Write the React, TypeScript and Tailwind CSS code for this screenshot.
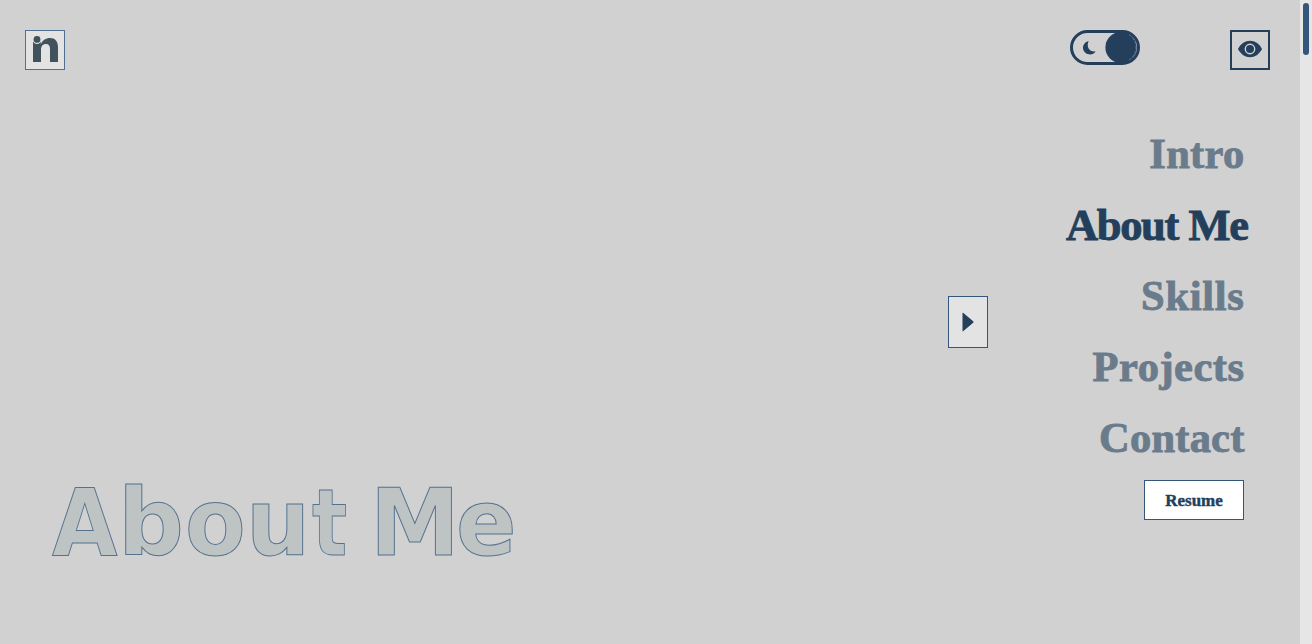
import React from "react";

type NavItem = { label: string; className: string };

const idle = "text-[42.5px] text-[#6a7c8c] pr-[55.5px]";

const items: NavItem[] = [
  { label: "Intro", className: idle + " tracking-[0.3px]" },
  { label: "About Me", className: "text-[44.5px] text-[#233f5b] pt-px pr-[52.5px] tracking-[-1.4px] [word-spacing:1px]" },
  { label: "Skills", className: idle + " tracking-[0.7px]" },
  { label: "Projects", className: idle + " tracking-[0.5px]" },
  { label: "Contact", className: idle + " tracking-[0.2px]" },
];

const letters = [
  { ch: "A", className: "w-[66px] scale-x-[0.91]" },
  { ch: "b", className: "w-[66.5px] scale-x-[0.99]" },
  { ch: "o", className: "w-[61px] scale-x-[0.95]" },
  { ch: "u", className: "w-[66.5px] scale-x-[0.97]" },
  { ch: "t", className: "w-[57.5px] scale-x-[0.79]" },
  { ch: "M", className: "w-[86.5px] scale-x-[0.97]" },
  { ch: "e", className: "w-[60px] scale-x-[0.96]" },
];

function Logo() {
  return (
    <div className="h-10 w-10 border border-[#4d7094] bg-[#e3e3e3]">
      <svg width="38" height="38" viewBox="26 31 38 38" fill="#41525a">
        <path d="M33 62V41.5H40.8V44.2C42.6 40.2 46 38 50 38C55.2 38 58 41.4 58 47V62H50V49C50 45.6 48.6 44 46 44C42.8 44 41 46 41 50V62Z" />
        <circle cx="37" cy="39.6" r="4.3" fill="#e3e3e3" />
        <circle cx="37" cy="39.4" r="3.4" />
      </svg>
    </div>
  );
}

function Toggle() {
  return (
    <button className="flex h-[35px] w-[70px] items-center justify-between rounded-full border-[3px] border-[#233f5b] pl-[9px]">
      <svg width="15" height="15" viewBox="0 0 15 15" fill="#233f5b">
        <path d="M6.7.9C.4 2.5-.8 9.8 3.6 13C7.4 15.7 12.5 14.3 13.7 11.2C8.2 12.5 3.6 7.4 6.7.9Z" />
      </svg>
      <svg width="32" height="31" viewBox="0 0 32 31">
        <circle cx="16" cy="15.5" r="15.6" fill="#233f5b" />
        <path d="M24 2.6A15 15 0 0 1 24 27.8" fill="none" stroke="#7c8b9a" strokeWidth=".6" strokeDasharray="3 1.5" />
      </svg>
    </button>
  );
}

export default function App() {
  return (
    <div className="flex h-[644px] w-full overflow-hidden bg-[#d1d1d1] font-['Liberation_Serif',serif]">
      <main className="flex flex-1 items-center">
        <section className="flex h-full flex-1 flex-col justify-between pt-[30px] pl-[25px]">
          <Logo />
          <h1
            aria-label="About Me"
            className="mb-[61px] ml-[27px] flex h-[120px] items-center whitespace-pre [font-family:'DejaVu_Sans',sans-serif] text-[93px] leading-[120px] font-bold text-[#bec3c4] [-webkit-text-stroke:1px_#55738f]"
          >
            {letters.map((l) => (
              <span key={l.ch} className={"origin-left " + l.className}>{l.ch}</span>
            ))}
          </h1>
        </section>
        <button className="flex h-[52px] w-10 items-center justify-center border border-[#34567a] bg-[#e3e3e3]">
          <svg width="12" height="20" viewBox="0 0 12 20" fill="#233f5b">
            <path d="M.5 1.2Q.5.2 1.4 1L11.2 9.3Q12 10 11.2 10.7L1.4 19Q.5 19.8.5 18.8Z" />
          </svg>
        </button>
        <aside className="flex h-full w-[312px] flex-col items-end pt-[30px]">
          <div className="flex w-full items-start justify-between pr-[30px] pl-[82px]">
            <Toggle />
            <button className="flex h-10 w-10 items-center justify-center border-2 border-[#233f5b]">
              <svg width="24" height="18" viewBox="0 0 24 18" className="-mt-[2px]">
                <path d="M0 9C3 3.5 7 .8 12 .8S21 3.5 24 9C21 14.5 17 17.2 12 17.2S3 14.5 0 9Z" fill="#233f5b" />
                <circle cx="12" cy="9" r="4.7" fill="none" stroke="#d1d1d1" strokeWidth="1.4" />
              </svg>
            </button>
          </div>
          <nav className="mt-12 flex w-full flex-col">
            {items.map((item) => (
              <a key={item.label} className={"block h-[71px] text-right leading-[71px] font-bold whitespace-nowrap [-webkit-text-stroke:0.9px_currentColor] " + item.className}>
                {item.label}
              </a>
            ))}
          </nav>
          <button className="mt-[7px] mr-14 h-10 w-[100px] border border-[#34567a] bg-white pt-px text-[17px] font-bold text-[#233f5b] [-webkit-text-stroke:0.4px_currentColor]">
            Resume
          </button>
        </aside>
      </main>
      <div className="flex w-3 justify-center bg-[#e6e6e6] pt-[3px]">
        <div className="h-[52px] w-[6px] rounded-full bg-[#34567a]" />
      </div>
    </div>
  );
}
